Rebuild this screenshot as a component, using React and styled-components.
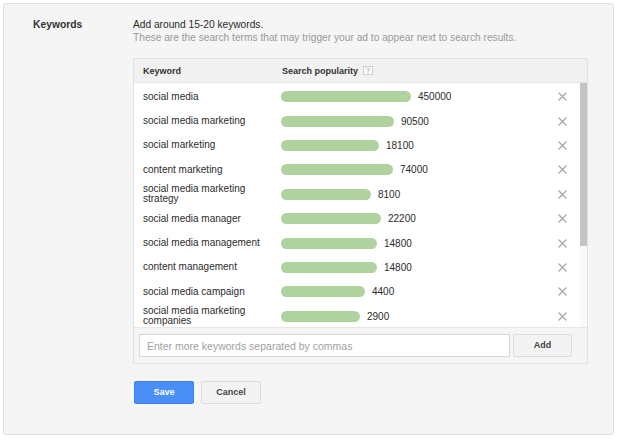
import React from "react";
import styled, { createGlobalStyle } from "styled-components";

const Global = createGlobalStyle`
  html, body { margin: 0; padding: 0; background: #ffffff; }
  body { font-family: "Liberation Sans", Arial, sans-serif; color: #333; }
  * { box-sizing: border-box; }
`;

const Panel = styled.div`
  margin: 3px;
  width: 611px;
  height: 432px;
  background: #f5f5f5;
  border: 1px solid #e0e0e0;
  border-radius: 3px;
  display: grid;
  grid-template-columns: 100px 455px;
  padding: 14px 0 0 29px;
`;

const Label = styled.div`
  font-size: 10.3px;
  font-weight: bold;
  line-height: 13px;
  color: #333;
`;

const Content = styled.div`
  display: flex;
  flex-direction: column;
`;

const Title = styled.div`
  font-size: 10.2px;
  line-height: 13px;
  color: #2b2b2b;
`;

const Hint = styled.div`
  font-size: 10.2px;
  line-height: 13px;
  color: #9a9a9a;
`;

const Table = styled.div`
  margin-top: 14px;
  border: 1px solid #e2e2e2;
  background: #fff;
  display: flex;
  flex-direction: column;
`;

const Header = styled.div`
  height: 24px;
  background: #f1f1f1;
  border-bottom: 1px solid #e6e6e6;
  display: flex;
  align-items: center;
  font-size: 9px;
  font-weight: bold;
  color: #333;
`;

const HeadCell = styled.div`
  width: ${(p) => p.$w}px;
  padding-left: ${(p) => p.$pl || 0}px;
  display: flex;
  align-items: center;
  gap: 5px;
`;

const Help = styled.span`
  display: inline-flex;
  align-items: center;
  justify-content: center;
  width: 10px;
  height: 9px;
  border: 1px solid #cfcfcf;
  background: #fafafa;
  color: #999;
  font-size: 7px;
  font-weight: normal;
  line-height: 1;
`;

const ListWrap = styled.div`
  height: 244px;
  display: flex;
`;

const Rows = styled.div`
  flex: 1;
  overflow: hidden;
  padding-top: 1.5px;
`;

const Track = styled.div`
  width: 7px;
  background: #fafafa;
  display: flex;
  flex-direction: column;
`;

const Thumb = styled.div`
  height: 163px;
  background: #c4c4c4;
`;

const Row = styled.div`
  height: 24.4px;
  display: flex;
  align-items: center;
`;

const KeywordCell = styled.div`
  width: 147px;
  padding: 0 10px 0 9px;
  font-size: 10px;
  line-height: 10px;
  color: #2b2b2b;
`;

const PopCell = styled.div`
  width: 275px;
  display: flex;
  align-items: center;
`;

const Bar = styled.div`
  height: 11px;
  border-radius: 6px;
  background: #afd29e;
`;

const Count = styled.span`
  margin-left: 7px;
  font-size: 10px;
  color: #2b2b2b;
`;

const Remove = styled.button`
  border: 0;
  background: none;
  padding: 0;
  width: 12px;
  height: 12px;
  display: flex;
  align-items: center;
  justify-content: center;
  cursor: pointer;
`;

const Footer = styled.div`
  height: 36px;
  border-top: 1px solid #e6e6e6;
  background: #f5f5f5;
  display: flex;
  align-items: center;
  gap: 3px;
  padding: 0 0 0 5px;
`;

const Input = styled.input`
  width: 371px;
  height: 23px;
  border: 1px solid #d9d9d9;
  background: #fff;
  padding: 0 7px;
  font-family: "Liberation Sans", Arial, sans-serif;
  font-size: 10.5px;
  color: #333;
  outline: none;
  &::placeholder { color: #a0a0a0; }
`;

const Button = styled.button`
  width: ${(p) => p.$w || 60}px;
  height: 23px;
  padding: 0;
  line-height: 1;
  display: inline-flex;
  align-items: center;
  justify-content: center;
  border-radius: 2px;
  font-family: "Liberation Sans", Arial, sans-serif;
  font-size: 9px;
  font-weight: bold;
  cursor: pointer;
  border: 1px solid ${(p) => (p.$primary ? "#3c80f0" : "#dcdcdc")};
  background: ${(p) => (p.$primary ? "#4a8ef7" : "#f3f3f3")};
  color: ${(p) => (p.$primary ? "#fff" : "#444")};
`;

const Actions = styled.div`
  margin-top: 17px;
  padding-left: 1px;
  display: flex;
  gap: 7px;
`;

const X = () => (
  <svg width="9" height="9" viewBox="0 0 9 9">
    <path d="M1 1 L8 8 M8 1 L1 8" stroke="#a9a9a9" strokeWidth="1.4" strokeLinecap="round" />
  </svg>
);

const rows = [
  ["social media", 130, "450000"],
  ["social media marketing", 113, "90500"],
  ["social marketing", 98, "18100"],
  ["content marketing", 112, "74000"],
  ["social media marketing strategy", 90, "8100"],
  ["social media manager", 100, "22200"],
  ["social media management", 96, "14800"],
  ["content management", 96, "14800"],
  ["social media campaign", 84, "4400"],
  ["social media marketing companies", 79, "2900"],
];

export default function App() {
  return (
    <>
      <Global />
      <Panel>
        <Label>Keywords</Label>
        <Content>
          <Title>Add around 15-20 keywords.</Title>
          <Hint>These are the search terms that may trigger your ad to appear next to search results.</Hint>
          <Table>
            <Header>
              <HeadCell $w={148} $pl={9}>Keyword</HeadCell>
              <HeadCell $w={200}>
                Search popularity <Help>?</Help>
              </HeadCell>
            </Header>
            <ListWrap>
              <Rows>
                {rows.map(([kw, w, n]) => (
                  <Row key={kw}>
                    <KeywordCell>{kw}</KeywordCell>
                    <PopCell>
                      <Bar style={{ width: w }} />
                      <Count>{n}</Count>
                    </PopCell>
                    <Remove aria-label="Remove"><X /></Remove>
                  </Row>
                ))}
              </Rows>
              <Track>
                <Thumb />
              </Track>
            </ListWrap>
            <Footer>
              <Input placeholder="Enter more keywords separated by commas" />
              <Button $w={59}>Add</Button>
            </Footer>
          </Table>
          <Actions>
            <Button $primary>Save</Button>
            <Button>Cancel</Button>
          </Actions>
        </Content>
      </Panel>
    </>
  );
}
